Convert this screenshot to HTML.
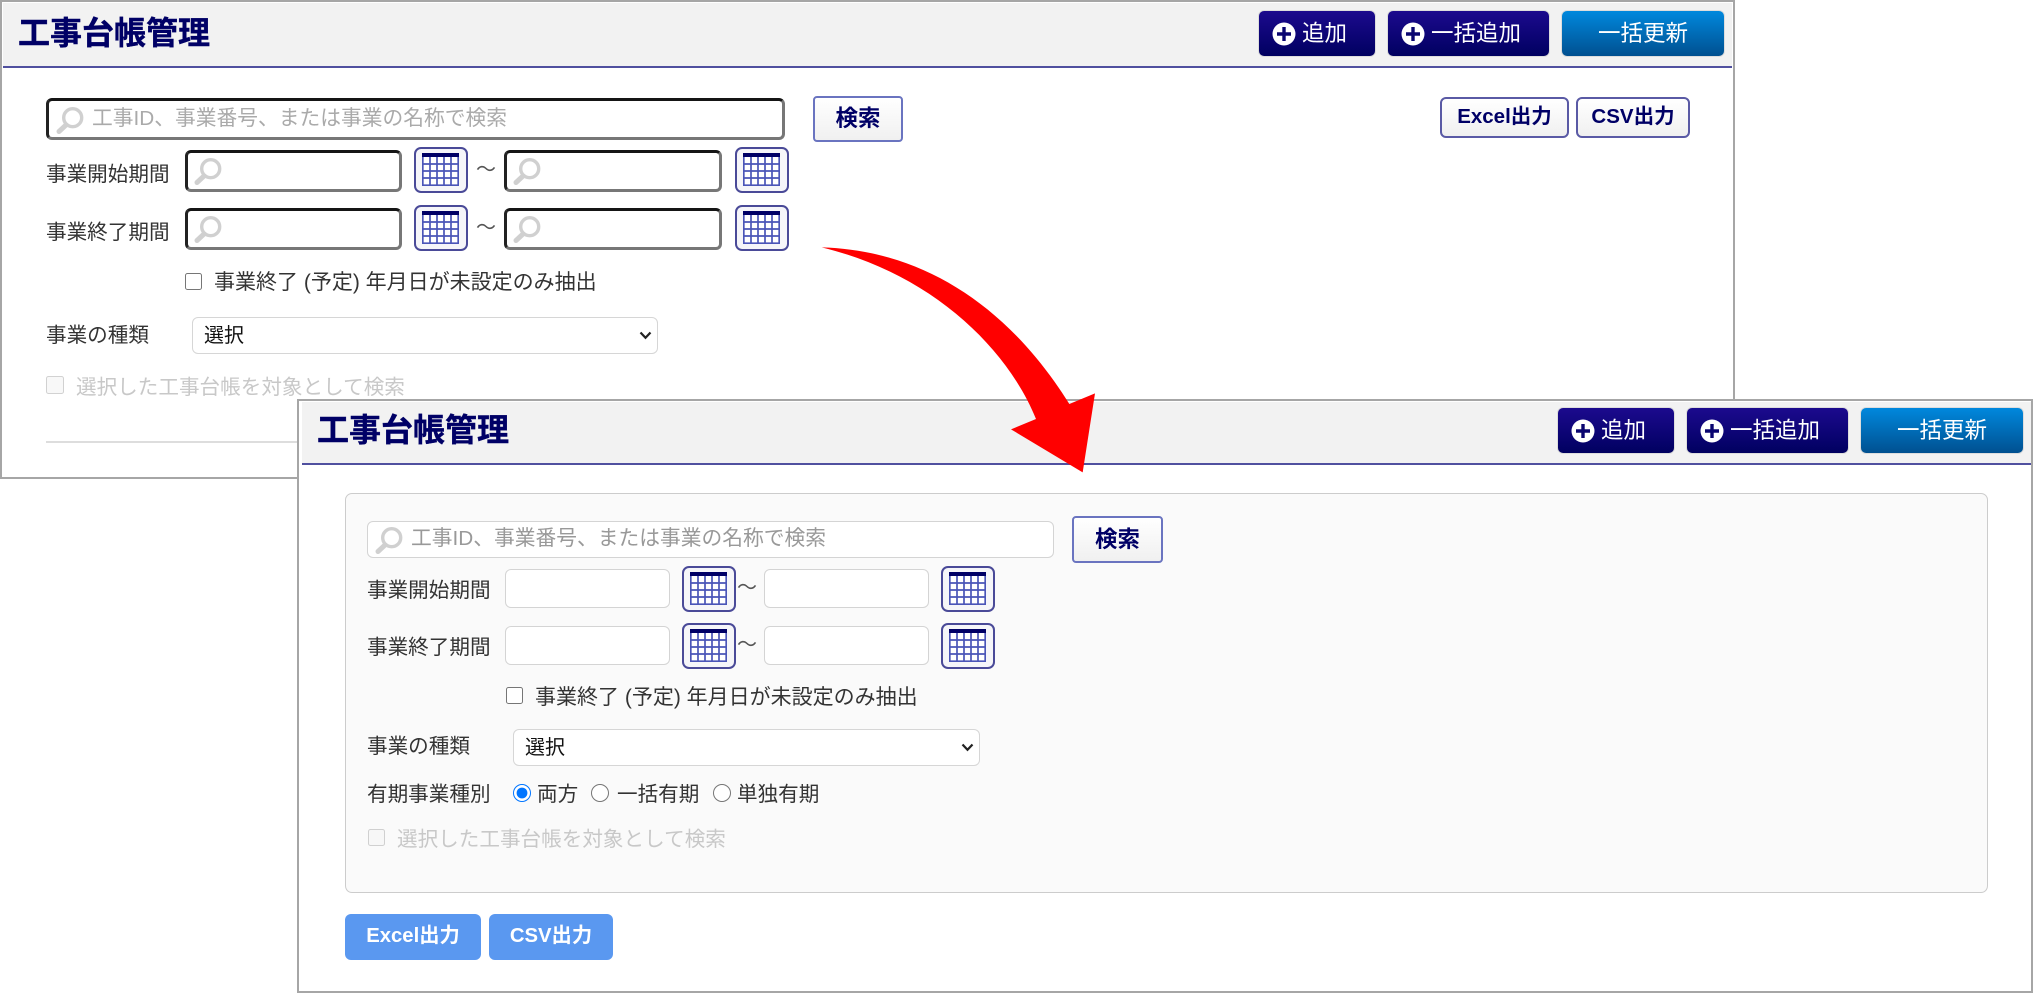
<!DOCTYPE html>
<html lang="ja"><head><meta charset="utf-8"><title>工事台帳管理</title>
<style>
html,body{margin:0;padding:0;background:#fff;}
body{position:relative;width:2033px;height:993px;overflow:hidden;font-family:"Liberation Sans","Noto Sans CJK JP",sans-serif;color:#333;}
.a,.t,.win,.hd,.btn,.ti,.in,.cal,.sb,.ex,.bl,input,select,svg{position:absolute;box-sizing:border-box;}
.win{background:#fff;border:2.5px solid #a6a6a6;}
.hd{background:#f2f2f2;border-bottom:2px solid #50509f;}
.t{white-space:nowrap;line-height:30px;font-size:20.6px;color:#333;}
.t.l{font-size:21px;}
.t.p{font-size:20.75px;}
.t.w{font-size:20px;color:#555;}
.ti{white-space:nowrap;font-size:32px;line-height:40px;font-weight:700;color:#000066;-webkit-text-stroke:.4px #000066;}
.btn{height:47px;border-radius:6px;color:#fff;font-size:22.5px;line-height:45px;white-space:nowrap;background:linear-gradient(#1c0a8e,#000060);border:1px solid #ddd;}
.btn.b{background:linear-gradient(#0088dd,#005090);}
.btn span{position:absolute;top:0;}
.in{background:#fff;border:3px solid;border-color:#151515 #777 #777 #222;border-radius:6px;}
.in2{background:#fff;border:1.5px solid #d4d4d4;border-radius:6px;position:absolute;box-sizing:border-box;}
.cal{width:54px;height:46px;background:#f5f5f9;border:2.5px solid #4a4a98;border-radius:7px;}
.cal svg{left:6px;top:3.5px;}
.sb{background:linear-gradient(#fff,#f0f0f0);border:2px solid #6a74c0;border-radius:4px;color:#000066;font-weight:700;font-size:22.5px;text-align:center;}
.ex{background:linear-gradient(#fff,#f0f0f0);border:2px solid #5a5aa5;border-radius:6px;color:#000066;font-weight:700;font-size:20.5px;text-align:center;line-height:36px;height:41px;top:97px;white-space:nowrap;}
.bl{background:#5a98f0;border-radius:6px;color:#fff;font-weight:700;font-size:20.3px;text-align:center;line-height:44px;height:46px;top:914px;white-space:nowrap;}
input{margin:0;}
select{font:20px "Liberation Sans","Noto Sans CJK JP",sans-serif;color:#111;background:#fff;border:1.5px solid #d6d6d6;border-radius:6px;padding-left:11px;-webkit-appearance:none;appearance:none;}
</style></head><body>

<!-- window 1 -->
<div class="win" style="left:0;top:0;width:1735px;height:479px;"></div>
<div class="hd" style="left:3px;top:3px;width:1729px;height:65px;"></div>
<div class="ti" style="left:18px;top:13px;">工事台帳管理</div>

<div class="btn" style="left:1258px;top:10px;width:118px;">
<svg style="left:13px;top:11px" width="24" height="24" viewBox="0 0 24 24"><circle cx="12" cy="12" r="11.5" fill="#fff"/><path d="M12 5v14M5 12h14" stroke="#0a0570" stroke-width="3.4"/></svg>
<span style="left:43px">追加</span></div>
<div class="btn" style="left:1387px;top:10px;width:163px;">
<svg style="left:13px;top:11px" width="24" height="24" viewBox="0 0 24 24"><circle cx="12" cy="12" r="11.5" fill="#fff"/><path d="M12 5v14M5 12h14" stroke="#0a0570" stroke-width="3.4"/></svg>
<span style="left:43px">一括追加</span></div>
<div class="btn b" style="left:1561px;top:10px;width:164px;"><span style="left:36px">一括更新</span></div>

<div class="in" style="left:46px;top:98px;width:739px;height:42px;"></div>
<svg style="left:56px;top:107px" width="28" height="27" viewBox="0 0 28 27"><circle cx="16.7" cy="10.7" r="9" fill="none" stroke="#d0d0d0" stroke-width="3.4"/><path d="M10 18L3 24.5" stroke="#d0d0d0" stroke-width="5" stroke-linecap="round"/></svg>
<div class="t p" style="left:92px;top:104px;color:#aaa;">工事ID、事業番号、または事業の名称で検索</div>
<div class="sb" style="left:813px;top:96px;width:90px;height:46px;line-height:42px;">検索</div>
<div class="ex" style="left:1440px;width:129px;">Excel出力</div>
<div class="ex" style="left:1576px;width:114px;">CSV出力</div>

<div class="t" style="left:46px;top:160px;">事業開始期間</div>
<div class="in" style="left:185px;top:150px;width:217px;height:42px;"></div>
<svg style="left:194px;top:158px" width="28" height="27" viewBox="0 0 28 27"><circle cx="16.7" cy="10.7" r="9" fill="none" stroke="#d0d0d0" stroke-width="3.4"/><path d="M10 18L3 24.5" stroke="#d0d0d0" stroke-width="5" stroke-linecap="round"/></svg>
<div class="cal" style="left:414px;top:147px;"><svg width="37" height="33" viewBox="0 0 37 33"><rect x="0" y="0" width="37" height="33" fill="#fff"/><rect width="37" height="4" fill="#000066"/><path d="M.8 4v28.2M8 4v28.2M15 4v28.2M22 4v28.2M29 4v28.2M36.2 4v28.2M0 11h37M0 18h37M0 25h37M0 32.2h37" stroke="#4a55b8" stroke-width="1.7" fill="none"/></svg></div>
<div class="t w" style="left:476px;top:155px;">～</div>
<div class="in" style="left:504px;top:150px;width:218px;height:42px;"></div>
<svg style="left:513px;top:158px" width="28" height="27" viewBox="0 0 28 27"><circle cx="16.7" cy="10.7" r="9" fill="none" stroke="#d0d0d0" stroke-width="3.4"/><path d="M10 18L3 24.5" stroke="#d0d0d0" stroke-width="5" stroke-linecap="round"/></svg>
<div class="cal" style="left:735px;top:147px;"><svg width="37" height="33" viewBox="0 0 37 33"><rect x="0" y="0" width="37" height="33" fill="#fff"/><rect width="37" height="4" fill="#000066"/><path d="M.8 4v28.2M8 4v28.2M15 4v28.2M22 4v28.2M29 4v28.2M36.2 4v28.2M0 11h37M0 18h37M0 25h37M0 32.2h37" stroke="#4a55b8" stroke-width="1.7" fill="none"/></svg></div>

<div class="t" style="left:46px;top:218px;">事業終了期間</div>
<div class="in" style="left:185px;top:208px;width:217px;height:42px;"></div>
<svg style="left:194px;top:216px" width="28" height="27" viewBox="0 0 28 27"><circle cx="16.7" cy="10.7" r="9" fill="none" stroke="#d0d0d0" stroke-width="3.4"/><path d="M10 18L3 24.5" stroke="#d0d0d0" stroke-width="5" stroke-linecap="round"/></svg>
<div class="cal" style="left:414px;top:205px;"><svg width="37" height="33" viewBox="0 0 37 33"><rect x="0" y="0" width="37" height="33" fill="#fff"/><rect width="37" height="4" fill="#000066"/><path d="M.8 4v28.2M8 4v28.2M15 4v28.2M22 4v28.2M29 4v28.2M36.2 4v28.2M0 11h37M0 18h37M0 25h37M0 32.2h37" stroke="#4a55b8" stroke-width="1.7" fill="none"/></svg></div>
<div class="t w" style="left:476px;top:213px;">～</div>
<div class="in" style="left:504px;top:208px;width:218px;height:42px;"></div>
<svg style="left:513px;top:216px" width="28" height="27" viewBox="0 0 28 27"><circle cx="16.7" cy="10.7" r="9" fill="none" stroke="#d0d0d0" stroke-width="3.4"/><path d="M10 18L3 24.5" stroke="#d0d0d0" stroke-width="5" stroke-linecap="round"/></svg>
<div class="cal" style="left:735px;top:205px;"><svg width="37" height="33" viewBox="0 0 37 33"><rect x="0" y="0" width="37" height="33" fill="#fff"/><rect width="37" height="4" fill="#000066"/><path d="M.8 4v28.2M8 4v28.2M15 4v28.2M22 4v28.2M29 4v28.2M36.2 4v28.2M0 11h37M0 18h37M0 25h37M0 32.2h37" stroke="#4a55b8" stroke-width="1.7" fill="none"/></svg></div>

<input type="checkbox" style="left:185px;top:273px;width:17px;height:17px;">
<div class="t l" style="left:214px;top:268px;">事業終了 (予定) 年月日が未設定のみ抽出</div>
<div class="t" style="left:46px;top:321px;">事業の種類</div>
<select style="left:192px;top:317px;width:466px;height:37px;"><option>選択</option></select>
<svg style="left:639px;top:331px" width="13" height="9" viewBox="0 0 13 9"><path d="M1.5 1.5L6.5 6.8L11.5 1.5" fill="none" stroke="#222" stroke-width="2.2"/></svg>
<input type="checkbox" disabled style="left:46px;top:376px;width:18px;height:18px;">
<div class="t" style="left:76px;top:373px;color:#c8c8c8;font-size:20.6px;">選択した工事台帳を対象として検索</div>
<div class="a" style="left:46px;top:441px;width:260px;height:2px;background:#ddd;"></div>

<!-- window 2 -->
<div class="win" style="left:297px;top:399px;width:1736px;height:594px;"></div>
<div class="hd" style="left:302px;top:402px;width:1729px;height:63px;"></div>
<div class="ti" style="left:317px;top:410px;">工事台帳管理</div>

<div class="btn" style="left:1557px;top:407px;width:118px;">
<svg style="left:13px;top:11px" width="24" height="24" viewBox="0 0 24 24"><circle cx="12" cy="12" r="11.5" fill="#fff"/><path d="M12 5v14M5 12h14" stroke="#0a0570" stroke-width="3.4"/></svg>
<span style="left:43px">追加</span></div>
<div class="btn" style="left:1686px;top:407px;width:163px;">
<svg style="left:13px;top:11px" width="24" height="24" viewBox="0 0 24 24"><circle cx="12" cy="12" r="11.5" fill="#fff"/><path d="M12 5v14M5 12h14" stroke="#0a0570" stroke-width="3.4"/></svg>
<span style="left:43px">一括追加</span></div>
<div class="btn b" style="left:1860px;top:407px;width:164px;"><span style="left:36px">一括更新</span></div>

<div class="a" style="left:345px;top:493px;width:1643px;height:400px;background:#fafafa;border:1.5px solid #ccc;border-radius:7px;"></div>

<div class="in2" style="left:367px;top:521px;width:687px;height:37px;"></div>
<svg style="left:375px;top:527px" width="28" height="27" viewBox="0 0 28 27"><circle cx="16.7" cy="10.7" r="9" fill="none" stroke="#d0d0d0" stroke-width="3.4"/><path d="M10 18L3 24.5" stroke="#d0d0d0" stroke-width="5" stroke-linecap="round"/></svg>
<div class="t p" style="left:411px;top:524px;color:#999;">工事ID、事業番号、または事業の名称で検索</div>
<div class="sb" style="left:1072px;top:516px;width:91px;height:47px;line-height:43px;">検索</div>

<div class="t" style="left:367px;top:576px;">事業開始期間</div>
<div class="in2" style="left:505px;top:569px;width:165px;height:39px;"></div>
<div class="cal" style="left:682px;top:566px;"><svg width="37" height="33" viewBox="0 0 37 33"><rect x="0" y="0" width="37" height="33" fill="#fff"/><rect width="37" height="4" fill="#000066"/><path d="M.8 4v28.2M8 4v28.2M15 4v28.2M22 4v28.2M29 4v28.2M36.2 4v28.2M0 11h37M0 18h37M0 25h37M0 32.2h37" stroke="#4a55b8" stroke-width="1.7" fill="none"/></svg></div>
<div class="t w" style="left:737px;top:573px;">～</div>
<div class="in2" style="left:764px;top:569px;width:165px;height:39px;"></div>
<div class="cal" style="left:941px;top:566px;"><svg width="37" height="33" viewBox="0 0 37 33"><rect x="0" y="0" width="37" height="33" fill="#fff"/><rect width="37" height="4" fill="#000066"/><path d="M.8 4v28.2M8 4v28.2M15 4v28.2M22 4v28.2M29 4v28.2M36.2 4v28.2M0 11h37M0 18h37M0 25h37M0 32.2h37" stroke="#4a55b8" stroke-width="1.7" fill="none"/></svg></div>

<div class="t" style="left:367px;top:633px;">事業終了期間</div>
<div class="in2" style="left:505px;top:626px;width:165px;height:39px;"></div>
<div class="cal" style="left:682px;top:623px;"><svg width="37" height="33" viewBox="0 0 37 33"><rect x="0" y="0" width="37" height="33" fill="#fff"/><rect width="37" height="4" fill="#000066"/><path d="M.8 4v28.2M8 4v28.2M15 4v28.2M22 4v28.2M29 4v28.2M36.2 4v28.2M0 11h37M0 18h37M0 25h37M0 32.2h37" stroke="#4a55b8" stroke-width="1.7" fill="none"/></svg></div>
<div class="t w" style="left:737px;top:630px;">～</div>
<div class="in2" style="left:764px;top:626px;width:165px;height:39px;"></div>
<div class="cal" style="left:941px;top:623px;"><svg width="37" height="33" viewBox="0 0 37 33"><rect x="0" y="0" width="37" height="33" fill="#fff"/><rect width="37" height="4" fill="#000066"/><path d="M.8 4v28.2M8 4v28.2M15 4v28.2M22 4v28.2M29 4v28.2M36.2 4v28.2M0 11h37M0 18h37M0 25h37M0 32.2h37" stroke="#4a55b8" stroke-width="1.7" fill="none"/></svg></div>

<input type="checkbox" style="left:506px;top:687px;width:17px;height:17px;">
<div class="t l" style="left:535px;top:683px;">事業終了 (予定) 年月日が未設定のみ抽出</div>
<div class="t" style="left:367px;top:732px;">事業の種類</div>
<select style="left:513px;top:729px;width:467px;height:37px;"><option>選択</option></select>
<svg style="left:961px;top:743px" width="13" height="9" viewBox="0 0 13 9"><path d="M1.5 1.5L6.5 6.8L11.5 1.5" fill="none" stroke="#222" stroke-width="2.2"/></svg>
<div class="t" style="left:367px;top:780px;">有期事業種別</div>
<input type="radio" name="k" checked style="left:513px;top:784px;width:18px;height:18px;">
<div class="t" style="left:537px;top:780px;">両方</div>
<input type="radio" name="k" style="left:591px;top:784px;width:18px;height:18px;">
<div class="t" style="left:617px;top:780px;">一括有期</div>
<input type="radio" name="k" style="left:713px;top:784px;width:18px;height:18px;">
<div class="t" style="left:737px;top:780px;">単独有期</div>
<input type="checkbox" disabled style="left:368px;top:829px;width:17px;height:17px;">
<div class="t" style="left:397px;top:825px;color:#c8c8c8;font-size:20.6px;">選択した工事台帳を対象として検索</div>

<div class="bl" style="left:345px;width:136px;">Excel出力</div>
<div class="bl" style="left:489px;width:124px;">CSV出力</div>

<!-- arrow -->
<svg style="left:780px;top:230px" width="360" height="260" viewBox="0 0 1080 780"><path d="M125 52C420 60 680 220 868 522L945 490L908 727L693 598L768 567C680 350 450 130 125 52Z" fill="#ff0000"/></svg>
</body></html>
